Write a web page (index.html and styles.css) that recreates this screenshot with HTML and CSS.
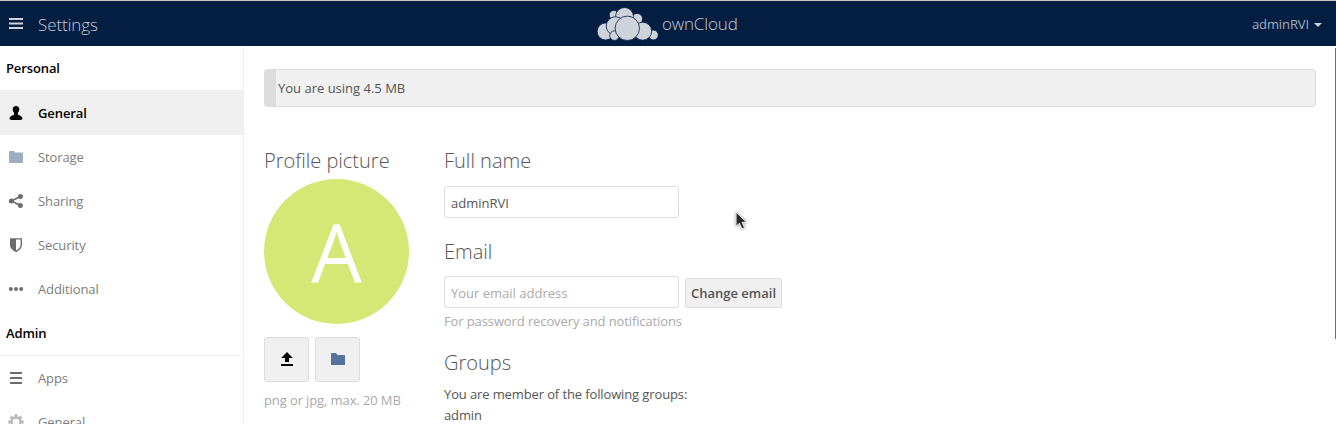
FILE: index.html
```html
<!DOCTYPE html>
<html lang="en">
<head>
<meta charset="utf-8">
<title>Settings - ownCloud</title>
<link rel="stylesheet" href="styles.css">
</head>
<body>
<header class="header">
  <div class="header-left">
    <svg class="burger" width="14" height="11" viewBox="0 0 14 11"><path d="M0 0h14v2H0zM0 4.500h14v2H0zM0 9h14v2H0z" fill="#cdd2db"/></svg>
    <span class="app-name">Settings</span>
  </div>
  <div class="brand">
    <svg class="logo" width="62" height="36" viewBox="0 0 62 36" fill="#cdd2db" stroke="#041e42" stroke-width=".8">
      <circle cx="16.800" cy="9" r="4.600"/>
      <circle cx="40" cy="13" r="5.600"/>
      <circle cx="27.500" cy="10.500" r="9"/>
      <circle cx="8.600" cy="25.500" r="8.500"/>
      <circle cx="56.400" cy="29" r="4.900"/>
      <circle cx="18.500" cy="20" r="9.300"/>
      <circle cx="17.500" cy="29.600" r="4.800"/>
      <circle cx="45.700" cy="25.200" r="9"/>
      <circle cx="30.300" cy="22.300" r="12.200"/>
    </svg>
    <span class="brand-name">ownCloud</span>
  </div>
  <div class="user"><span>adminRVI</span><svg width="8" height="4" viewBox="0 0 8 4"><path d="M0 0h8L4 4z" fill="#cdd2db"/></svg></div>
</header>
<div class="layout">
  <nav class="sidebar">
    <h2 class="nav-title">Personal</h2>
    <a class="nav-item active"><svg width="16" height="16" viewBox="0 0 16 16"><path d="M8 1.100c-2 0-3.300 1.300-3.300 3.200 0 1.500.6 2.600 1.400 3.400v1.900c-.3.700-3.900 1.200-4.400 3.400-.1.800 0 1.400.2 1.500C3 15 5.500 15 8 15s5-.1 6.100-.5c.2-.1.400-.7.200-1.500-.5-2.200-4.100-2.700-4.400-3.400V7.700c.8-.8 1.400-1.900 1.400-3.400C11.300 2.400 10 1.100 8 1.100z" fill="#000"/></svg><span>General</span></a>
    <a class="nav-item"><svg width="16" height="16" viewBox="0 0 16 16"><path d="M1.500 2H6l1.500 1.500h7a.5.5 0 0 1 .5.5v9.500a.5.5 0 0 1-.5.5h-13a.5.5 0 0 1-.5-.5v-11a.5.5 0 0 1 .5-.5z" fill="#9fadc4"/></svg><span>Storage</span></a>
    <a class="nav-item"><svg width="16" height="16" viewBox="0 0 16 16"><path d="M12.300 3.500L3.500 8l8.800 4.500" fill="none" stroke="#6c6c6c" stroke-width="1.700"/><g fill="#6c6c6c"><circle cx="12.400" cy="3.500" r="2.500"/><circle cx="3.400" cy="8" r="2.500"/><circle cx="12.400" cy="12.500" r="2.500"/></g></svg><span>Sharing</span></a>
    <a class="nav-item"><svg width="16" height="16" viewBox="0 0 16 16"><path fill-rule="evenodd" d="M2 1.200h12v6.300c0 3.600-2.500 6.200-6 7.500-3.500-1.300-6-3.900-6-7.500zM8 2.500v10.800c2.800-1.100 4.600-3.200 4.600-5.900V2.500z" fill="#6c6c6c"/></svg><span>Security</span></a>
    <a class="nav-item"><svg width="16" height="16" viewBox="0 0 16 16" fill="#6c6c6c"><circle cx="2.900" cy="8" r="2"/><circle cx="8" cy="8" r="2"/><circle cx="13.100" cy="8" r="2"/></svg><span>Additional</span></a>
    <h2 class="nav-title">Admin</h2>
    <a class="nav-item"><svg width="16" height="16" viewBox="0 0 16 16"><path d="M2 2h12v2H2zM2 7h12v2H2zM2 12h12v2H2z" fill="#6c6c6c"/></svg><span>Apps</span></a>
    <a class="nav-item"><svg width="16" height="16" viewBox="0 0 16 16"><circle cx="8" cy="8" r="4.600" fill="none" stroke="#b8b8b8" stroke-width="2.600"/><path d="M8 .3v2M8 13.700v2M.3 8h2M13.700 8h2M2.600 2.600L4 4M12 12l1.400 1.400M2.600 13.400L4 12M12 4l1.400-1.400" stroke="#b8b8b8" stroke-width="3"/></svg><span>General</span></a>
  </nav>
  <main class="content">
    <div class="quota"><div class="quota-used"></div><span>You are using 4.5 MB</span></div>
    <div class="profile">
      <section class="avatar-panel">
        <h3 class="heading">Profile picture</h3>
        <div class="avatar"><span>A</span></div>
        <div class="avatar-actions">
          <button class="icon-button"><svg width="16" height="16" viewBox="0 0 16 16"><path d="M8 1l5.800 6H10v4H6V7H2.200zM2 13h12v2H2z" fill="#000"/></svg></button>
          <button class="icon-button"><svg width="16" height="16" viewBox="0 0 16 16"><path d="M1.500 2H6l1.500 2h7a.5.5 0 0 1 .5.5v9a.5.5 0 0 1-.5.5h-13a.5.5 0 0 1-.5-.5v-11a.5.5 0 0 1 .5-.5z" fill="#54739c"/></svg></button>
        </div>
        <p class="hint avatar-hint">png or jpg, max. 20 MB</p>
      </section>
      <div class="details">
        <section class="field-name">
          <h3 class="heading">Full name</h3>
          <input class="input" type="text" value="adminRVI">
        </section>
        <section class="field-email">
          <h3 class="heading">Email</h3>
          <div class="email-row"><input class="input" type="text" placeholder="Your email address"><button class="button">Change email</button></div>
          <p class="hint">For password recovery and notifications</p>
        </section>
        <section class="groups">
          <h3 class="heading">Groups</h3>
          <p>You are member of the following groups:<br>admin</p>
        </section>
      </div>
    </div>
  </main>
</div>
<div class="scroll-thumb"></div>
<svg class="pointer" width="16" height="22" viewBox="0 0 16 22"><path d="M2 2v14.500l3.400-3.200 2.500 5.600 2.700-1.200-2.500-5.400h4.600z" fill="#2b2b2b" stroke="#fff" stroke-width="1"/></svg>
</body>
</html>
```

FILE: styles.css
```css
* { box-sizing: border-box; }
body {
  margin: 0;
  height: 424px;
  overflow: hidden;
  background: #fff;
  color: #555;
  font: 13px/21px "Open Sans", sans-serif;
}
h2, h3, p { margin: 0; }
svg { display: block; flex: none; }

.header {
  display: grid;
  grid-template-columns: 588px auto 1fr;
  align-items: center;
  height: 46px;
  padding: 0 14px 0 9px;
  border-top: 1px solid #c5c5c5;
  background: #041e42;
  color: #a4aebd;
}
.header-left { display: flex; align-items: center; gap: 15px; }
.app-name { padding-top: 1px; font-size: 17px; font-weight: 300; letter-spacing: -.1px; color: #c3cad5; }
.brand { display: flex; align-items: center; gap: 3px; }
.brand-name { font-size: 17px; font-weight: 300; letter-spacing: -.15px; color: #c3cad5; }
.user { display: flex; align-items: center; justify-content: flex-end; gap: 5px; padding-top: 2px; }
.user span { letter-spacing: -.1px; }

.layout { display: flex; height: 378px; }
.sidebar {
  flex: none;
  width: 244px;
  overflow: hidden;
  border-right: 1px solid #eee;
}
.nav-title {
  height: 45px;
  padding-left: 6px;
  border-bottom: 1px solid #efefef;
  color: #000;
  font-size: 13px;
  font-weight: 600;
  letter-spacing: -.12px;
  line-height: 44px;
}
.nav-item {
  display: flex;
  align-items: center;
  gap: 14px;
  height: 44px;
  padding-left: 8px;
  color: #7c7c7c;
  letter-spacing: -.1px;
}
.nav-item.active { background: #efefef; color: #000; font-weight: 600; }

.content { flex: 1; padding: 23px 20px 0; overflow: hidden; }
.quota {
  display: flex;
  align-items: center;
  gap: 2px;
  height: 38px;
  border: 1px solid #ddd;
  border-radius: 3px;
  background: #f0f0f0;
}
.quota-used { width: 11px; height: 100%; background: #dcdcdc; }
.profile { display: flex; padding-top: 40px; }
.avatar-panel { flex: none; width: 180px; }
.heading {
  height: 32px;
  color: #555;
  font-size: 20px;
  font-weight: 300;
  line-height: 28px;
}
.avatar {
  display: flex;
  align-items: center;
  justify-content: center;
  width: 145px;
  height: 145px;
  padding-bottom: 3px;
  border-radius: 50%;
  background: #d5e875;
  color: #fff;
  font-size: 80px;
}
.avatar-actions { display: flex; gap: 6px; margin-top: 13px; }
.icon-button {
  display: flex;
  align-items: center;
  justify-content: center;
  width: 45px;
  height: 45px;
  padding: 0 0 1px;
  border: 1px solid #ddd;
  border-radius: 3px;
  background: #f0f0f0;
}
.hint { color: #aaa; letter-spacing: -.11px; }
.avatar-hint { margin-top: 8px; }
.input {
  display: block;
  width: 235px;
  height: 32px;
  padding: 2px 6px 0;
  border: 1px solid #ddd;
  border-radius: 3px;
  outline: none;
  background: #fff;
  color: #555;
  font: 13px "Open Sans", sans-serif;
}
.input::placeholder { color: #aaa; opacity: 1; }
.field-name .input { margin-top: 7px; }
.field-email { margin-top: 20px; }
.email-row { display: flex; align-items: flex-end; gap: 6px; margin: 6px 0 3px; }
.button {
  height: 30px;
  width: 97px;
  padding: 0;
  border: 1px solid #ddd;
  border-radius: 3px;
  background: #f0f0f0;
  color: #555;
  font: 600 13px "Open Sans", sans-serif;
}
.groups { margin-top: 17px; }
.groups p { letter-spacing: -.12px; }
.groups .heading { height: 35px; }

.scroll-thumb {
  position: absolute;
  top: 48px;
  right: 0;
  width: 1px;
  height: 291px;
  background: #6e6e6e;
}
.pointer {
  position: absolute;
  left: 734px;
  top: 210px;
  filter: drop-shadow(0 0 1px rgba(0, 0, 0, .5));
}
```
